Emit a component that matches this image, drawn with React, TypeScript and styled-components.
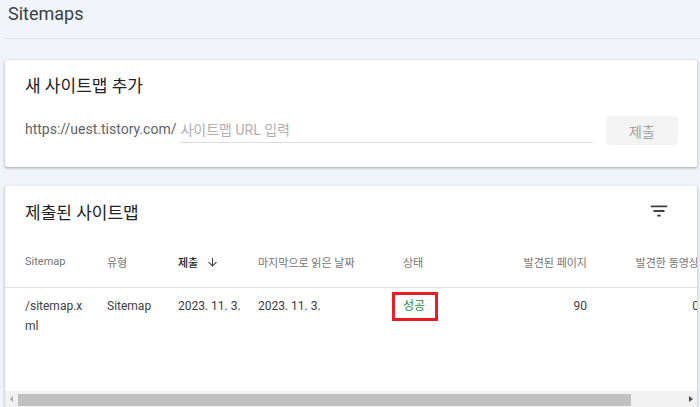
import React from "react";
import styled, { createGlobalStyle } from "styled-components";

const GlobalStyle = createGlobalStyle`
  html, body {
    margin: 0;
    padding: 0;
    background: #f1f4fb;
    overflow: hidden;
  }
  body {
    font-family: Roboto, "Noto Sans CJK KR", sans-serif;
    color: #3c4043;
  }
`;

const Page = styled.div`
  width: 700px;
  height: 407px;
  overflow: hidden;
  display: flex;
  flex-direction: column;
`;

const TopBar = styled.div`
  flex-shrink: 0;
  height: 39px;
  margin-left: 5px;
  padding: 3px 0 0 3px;
  box-sizing: border-box;
  border-bottom: 1px solid #dfe3ea;
  font-size: 18px;
  color: #3c4043;
`;

const Main = styled.div`
  display: flex;
  flex-direction: column;
  gap: 19px;
  padding: 21px 3px 0 5px;
`;

const Card = styled.section`
  flex-shrink: 0;
  background: #fff;
  border-radius: 2px;
  box-shadow: 0 1px 2px rgba(60, 64, 67, 0.3), 0 1px 3px 1px rgba(60, 64, 67, 0.12);
  overflow: hidden;
`;

const CardTitle = styled.h2`
  margin: 0;
  font-size: 17px;
  font-weight: 400;
  color: #202124;
  line-height: 24px;
`;

const AddCard = styled(Card)`
  height: 107px;
  padding: 14px 19px 0 20px;
  box-sizing: border-box;
`;

const FormRow = styled.div`
  display: flex;
  align-items: flex-end;
  margin-top: 18px;
`;

const Prefix = styled.span`
  font-size: 14px;
  color: #5f6368;
  line-height: 20px;
  padding-bottom: 4px;
  margin-right: 4px;
`;

const UrlInput = styled.input`
  flex: 1;
  border: none;
  border-bottom: 1px solid #dadce0;
  outline: none;
  font: inherit;
  font-size: 14px;
  padding: 0 0 2px 0;
  height: 24px;
  box-sizing: border-box;
  background: transparent;
  &::placeholder {
    color: #b3aeb2;
  }
`;

const SubmitButton = styled.button`
  margin-left: 13px;
  margin-bottom: -2px;
  width: 72px;
  height: 29px;
  border: none;
  border-radius: 4px;
  background: #f3f3f3;
  color: #a0a0a0;
  font: inherit;
  font-size: 14px;
`;

const ListCard = styled(Card)`
  height: 221px;
  display: flex;
  flex-direction: column;
`;

const TitleRow = styled.div`
  flex-shrink: 0;
  height: 51px;
  padding: 2px 27px 0 20px;
  box-sizing: border-box;
  display: flex;
  align-items: center;
  justify-content: space-between;
`;

const IconButton = styled.button`
  width: 22px;
  height: 22px;
  padding: 0;
  border: none;
  background: none;
  color: #3c4043;
  display: flex;
  margin-top: -3px;
`;

const TableArea = styled.div`
  flex-shrink: 0;
  height: 154px;
  overflow: hidden;
`;

const Table = styled.table`
  border-collapse: collapse;
  table-layout: fixed;
  width: 754px;
`;

const Th = styled.th<{ $w: number; $right?: boolean; $active?: boolean; $first?: boolean }>`
  width: ${(p) => p.$w}px;
  height: 50px;
  box-sizing: border-box;
  padding: 0 ${(p) => (p.$right ? 0 : 8)}px 0 ${(p) => (p.$first ? 20 : 0)}px;
  text-align: ${(p) => (p.$right ? "right" : "left")};
  font-size: 11px;
  font-weight: ${(p) => (p.$active ? 500 : 400)};
  color: ${(p) => (p.$active ? "#202124" : "#757575")};
  white-space: nowrap;
  border-bottom: 1px solid #e0e0e0;
  vertical-align: middle;
`;

const SortArrow = styled.span`
  display: inline-flex;
  vertical-align: middle;
  margin-left: 8px;
  margin-top: -2px;
`;

const Td = styled.td<{ $right?: boolean; $first?: boolean }>`
  padding: 8px ${(p) => (p.$first ? 22 : p.$right ? 0 : 8)}px 0 ${(p) => (p.$first ? 20 : 0)}px;
  text-align: ${(p) => (p.$right ? "right" : "left")};
  vertical-align: top;
  font-size: 12px;
  line-height: 20px;
  color: #3c4043;
  white-space: ${(p) => (p.$first ? "normal" : "nowrap")};
  word-break: ${(p) => (p.$first ? "break-all" : "normal")};
`;

const Status = styled.span`
  display: inline-block;
  margin: -4px 0 0 -11px;
  padding: 2px 10px 3px 8px;
  border: 3px solid #ec1c24;
  color: #1e8e3e;
  line-height: 18px;
`;

const ScrollBar = styled.div`
  flex-shrink: 0;
  height: 16px;
  display: flex;
  background: #f1f1f1;
  margin-top: auto;
`;

const ScrollArrow = styled.div<{ $dark?: boolean; $dir: "left" | "right" }>`
  width: 13px;
  display: flex;
  align-items: center;
  justify-content: center;
  &::before {
    content: "";
    border-top: 3px solid transparent;
    border-bottom: 3px solid transparent;
    ${(p) =>
      p.$dir === "left"
        ? `border-right: 3px solid ${p.$dark ? "#505050" : "#a3a3a3"};`
        : `border-left: 4px solid ${p.$dark ? "#505050" : "#a3a3a3"};`}
  }
`;

const Track = styled.div`
  flex: 1;
  padding: 3px 0 1px;
`;

const Thumb = styled.div`
  height: 100%;
  background: #c1c1c1;
`;

const columns = [
  { label: "Sitemap", w: 102, first: true },
  { label: "유형", w: 71 },
  { label: "제출", w: 80, active: true },
  { label: "마지막으로 읽은 날짜", w: 145 },
  { label: "상태", w: 77 },
  { label: "발견된 페이지", w: 107, right: true },
  { label: "발견한 동영상", w: 112, right: true },
  { label: "", w: 60 },
];

const FilterIcon = () => (
  <svg width="22" height="22" viewBox="0 0 24 24" fill="currentColor">
    <path d="M10 18h4v-2h-4v2zM3 6v2h18V6H3zm3 7h12v-2H6v2z" />
  </svg>
);

const ArrowDown = () => (
  <svg width="13" height="13" viewBox="0 0 24 24" fill="#3c4043">
    <path d="M20 12l-1.41-1.41L13 16.17V4h-2v12.17l-5.58-5.59L4 12l8 8 8-8z" />
  </svg>
);

const App = () => {
  return (
    <Page>
      <GlobalStyle />
      <TopBar>Sitemaps</TopBar>
      <Main>
        <AddCard>
          <CardTitle>새 사이트맵 추가</CardTitle>
          <FormRow>
            <Prefix>https://uest.tistory.com/</Prefix>
            <UrlInput placeholder="사이트맵 URL 입력" />
            <SubmitButton>제출</SubmitButton>
          </FormRow>
        </AddCard>

        <ListCard>
          <TitleRow>
            <CardTitle>제출된 사이트맵</CardTitle>
            <IconButton aria-label="필터">
              <FilterIcon />
            </IconButton>
          </TitleRow>
          <TableArea>
            <Table>
              <thead>
                <tr>
                  {columns.map((c, i) => (
                    <Th key={i} $w={c.w} $first={c.first} $right={c.right} $active={c.active}>
                      {c.label}
                      {c.active && (
                        <SortArrow>
                          <ArrowDown />
                        </SortArrow>
                      )}
                    </Th>
                  ))}
                </tr>
              </thead>
              <tbody>
                <tr>
                  <Td $first>/sitemap.xml</Td>
                  <Td>Sitemap</Td>
                  <Td>2023. 11. 3.</Td>
                  <Td>2023. 11. 3.</Td>
                  <Td>
                    <Status>성공</Status>
                  </Td>
                  <Td $right>90</Td>
                  <Td $right>0</Td>
                  <Td />
                </tr>
              </tbody>
            </Table>
          </TableArea>
          <ScrollBar>
            <ScrollArrow $dir="left" />
            <Track>
              <Thumb style={{ width: "92%" }} />
            </Track>
            <ScrollArrow $dir="right" $dark />
          </ScrollBar>
        </ListCard>
      </Main>
    </Page>
  );
};

export default App;
